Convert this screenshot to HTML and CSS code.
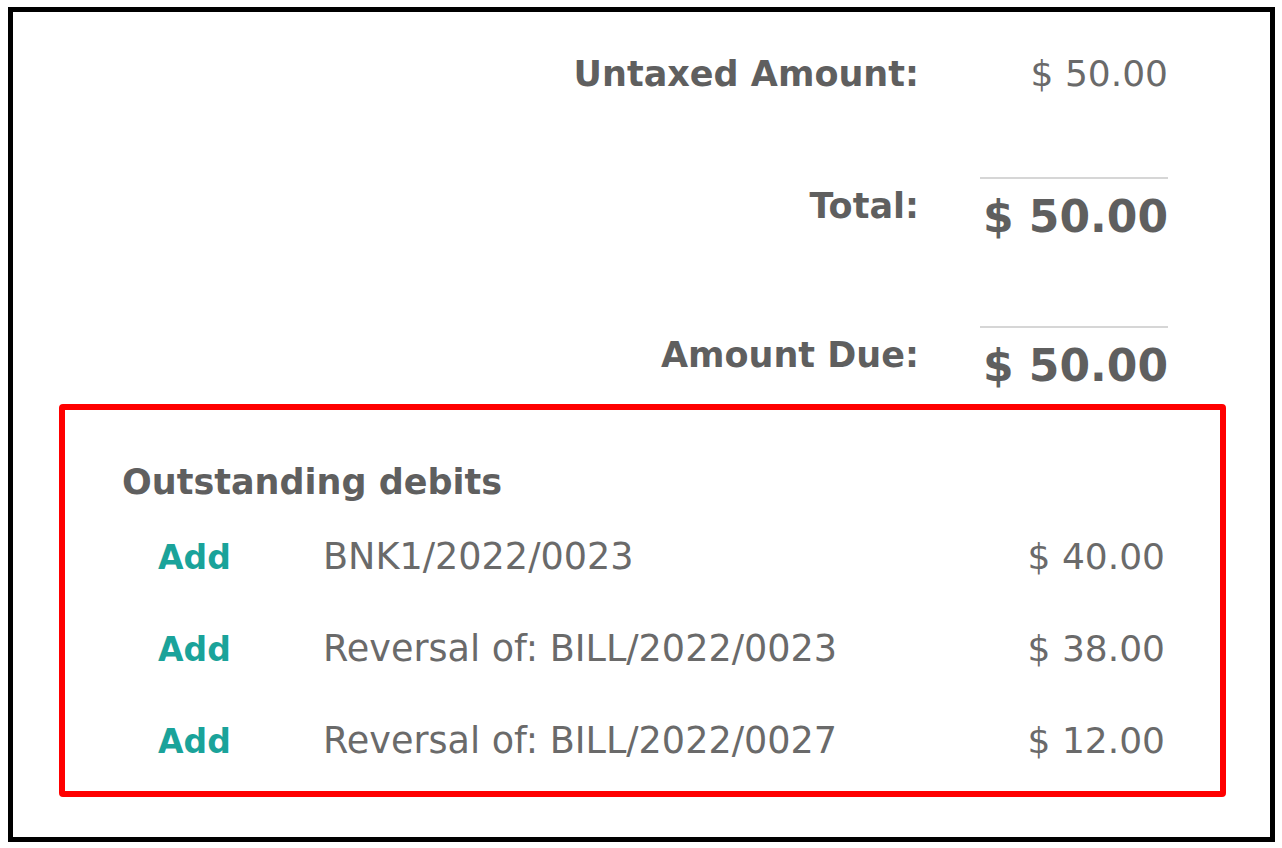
FILE: index.html
```html
<!DOCTYPE html>
<html lang="en">
<head>
<meta charset="utf-8">
<title>Invoice totals</title>
<link rel="stylesheet" href="styles.css">
</head>
<body>
<div class="frame">
  <div class="totals">
    <div class="total-row">
      <div class="label">Untaxed Amount:</div>
      <div class="value">$ 50.00</div>
    </div>
    <div class="total-row">
      <div class="label label-major">Total:</div>
      <div class="value value-major">$ 50.00</div>
    </div>
    <div class="total-row">
      <div class="label label-major">Amount Due:</div>
      <div class="value value-major">$ 50.00</div>
    </div>
  </div>
  <div class="outstanding">
    <div class="outstanding-title">Outstanding debits</div>
    <div class="debit-list">
      <div class="debit-row">
        <span class="add-link">Add</span>
        <span class="debit-name">BNK1/2022/0023</span>
        <span class="debit-amount">$ 40.00</span>
      </div>
      <div class="debit-row">
        <span class="add-link">Add</span>
        <span class="debit-name">Reversal of: BILL/2022/0023</span>
        <span class="debit-amount">$ 38.00</span>
      </div>
      <div class="debit-row">
        <span class="add-link">Add</span>
        <span class="debit-name">Reversal of: BILL/2022/0027</span>
        <span class="debit-amount">$ 12.00</span>
      </div>
    </div>
  </div>
</div>
</body>
</html>
```
FILE: styles.css
```css
html, body {
  margin: 0;
  padding: 0;
  background: #ffffff;
}

body {
  font-family: "DejaVu Sans", "Noto Sans", sans-serif;
  color: #666666;
}

.frame {
  box-sizing: border-box;
  margin: 7px 7px 6px 8px;
  height: 835px;
  border: 5px solid #000000;
  background: #ffffff;
  display: flex;
  flex-direction: column;
  overflow: hidden;
}

.totals {
  display: flex;
  flex-direction: column;
  gap: 81px;
  padding: 40px 102px 0 0;
}

.total-row {
  display: flex;
  justify-content: flex-end;
  align-items: flex-start;
  gap: 61px;
}

.label {
  font-size: 35px;
  line-height: 44px;
  font-weight: bold;
  color: #5f5f5f;
  text-align: right;
  white-space: nowrap;
}

.label-major {
  margin-top: 7px;
}

.value {
  width: 188px;
  text-align: right;
  font-size: 36px;
  line-height: 44px;
  color: #6a6a6a;
  white-space: nowrap;
}

.value-major {
  border-top: 2px solid #d6d6d6;
  padding-top: 10px;
  font-size: 44px;
  line-height: 56px;
  font-weight: bold;
  color: #5f5f5f;
}

.outstanding {
  margin: 10px 44px 0 46px;
  border: 6px solid #ff0000;
  border-radius: 4px;
  padding: 50px 55px 4px 57px;
}

.outstanding-title {
  font-size: 35px;
  line-height: 44px;
  font-weight: bold;
  color: #5f5f5f;
  white-space: nowrap;
}

.debit-list {
  margin-top: 7px;
  padding-left: 36px;
}

.debit-row {
  display: grid;
  grid-template-columns: 165px 1fr auto;
  align-items: baseline;
  height: 92px;
  line-height: 92px;
  white-space: nowrap;
}

.add-link {
  font-size: 33px;
  font-weight: bold;
  color: #1aa39a;
}

.debit-name {
  font-size: 36.6px;
  color: #6a6a6a;
}

.debit-amount {
  font-size: 36px;
  color: #6a6a6a;
  text-align: right;
}
```
